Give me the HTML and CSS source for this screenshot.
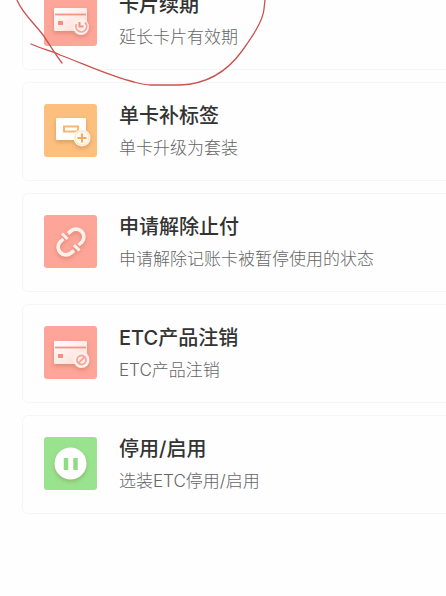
FILE: index.html
```html
<!DOCTYPE html>
<html lang="zh-CN">
<head>
    <meta charset="UTF-8">
    <meta name="viewport" content="width=device-width, initial-scale=1.0">
    <title>ETC服务</title>
    <link rel="stylesheet" href="styles.css">
</head>
<body>
    <main class="services">
        <a class="card" href="#renew">
            <svg class="icon icon-pink" viewBox="0 0 53 53" aria-hidden="true">
                <g class="shape">
                    <rect x="10" y="15" width="33" height="23" rx="1" fill="url(#fade)"/>
                    <path d="M11 21.5h31" stroke="#f59486" stroke-width="1.8"/>
                    <rect x="14" y="28" width="5" height="4" fill="#f28f80"/>
                    <circle cx="37" cy="34" r="8" fill="#fff0ec"/>
                </g>
                <path d="M32.5 31a5.4 5.4 0 1 0 8.500-1.5" fill="none" stroke="#f8a598" stroke-width="1.8"/>
                <path d="M35.500 29v4.500h4" fill="none" stroke="#f28f80" stroke-width="2"/>
            </svg>
            <div class="text">
                <h2>卡片续期</h2>
                <p>延长卡片有效期</p>
            </div>
        </a>

        <a class="card" href="#label">
            <svg class="icon icon-orange" viewBox="0 0 53 53" aria-hidden="true">
                <g class="shape">
                    <rect x="12" y="14" width="30" height="22" rx="1" fill="#fff"/>
                    <rect x="20" y="22.5" width="14" height="5" fill="none" stroke="#f5b671" stroke-width="2"/>
                    <circle cx="38" cy="34" r="8.500" fill="#fff8ee"/>
                </g>
                <circle cx="38" cy="34" r="7" fill="none" stroke="#fce3c4"/>
                <path d="M38 29.500v9M33.500 34h9" stroke="#f0ac60" stroke-width="2"/>
            </svg>
            <div class="text">
                <h2>单卡补标签</h2>
                <p>单卡升级为套装</p>
            </div>
        </a>

        <a class="card" href="#unblock">
            <svg class="icon icon-pink" viewBox="0 0 53 53" aria-hidden="true">
                <g class="shape" fill="none" stroke="#fff0e9" stroke-width="3.600">
                    <path d="M24 18.500l3-2.500a7.800 7.800 0 0 1 11 11l-3.500 3"/>
                    <path d="M30 35.500l-3 2.500a7.800 7.800 0 0 1-11-11l3.500-3"/>
                    <path d="M18 18.500l5.500 5.500M30 30l5.500 5.500" stroke-width="3"/>
                </g>
            </svg>
            <div class="text">
                <h2>申请解除止付</h2>
                <p>申请解除记账卡被暂停使用的状态</p>
            </div>
        </a>

        <a class="card" href="#cancel">
            <svg class="icon icon-pink" viewBox="0 0 53 53" aria-hidden="true">
                <g class="shape">
                    <rect x="10" y="15" width="33" height="23" rx="1" fill="url(#fade)"/>
                    <path d="M11 21.5h31" stroke="#f59486" stroke-width="1.8"/>
                    <rect x="14" y="28" width="5" height="4" fill="#f28f80"/>
                    <circle cx="37.500" cy="34" r="8" fill="#fff0ec"/>
                </g>
                <circle cx="37.500" cy="34" r="4.500" fill="none" stroke="#f8a598" stroke-width="1.800"/>
                <path d="M34.500 37l6-6" stroke="#f8a598" stroke-width="1.800"/>
            </svg>
            <div class="text">
                <h2>ETC产品注销</h2>
                <p>ETC产品注销</p>
            </div>
        </a>

        <a class="card" href="#switch">
            <svg class="icon icon-green" viewBox="0 0 53 53" aria-hidden="true">
                <circle class="shape" cx="26.500" cy="26.500" r="16" fill="#fff"/>
                <path d="M22 21v12M31.500 21v12" stroke="#8fdc85" stroke-width="4.500"/>
            </svg>
            <div class="text">
                <h2>停用/启用</h2>
                <p>选装ETC停用/启用</p>
            </div>
        </a>
    </main>

    <!-- Trazo rojo sobre la primera tarjeta -->
    <svg class="scribble" width="280" height="95" viewBox="0 0 280 95" aria-hidden="true">
        <defs>
            <linearGradient id="fade" x1="0" y1="0" x2="1" y2="1">
                <stop offset="0" stop-color="#fff"/>
                <stop offset="1" stop-color="#ffd9d1"/>
            </linearGradient>
        </defs>
        <path d="M17 0C22 13 35 24 43 35C50 45 55 54 62 63"/>
        <path d="M31 44C42 49 52 51 60 55C82 63 109 76 134 82C141 84 145 85 151 85H180C210 84 229 69 242 51C252 37 263 21 264 9L265 0"/>
    </svg>
</body>
</html>
```

FILE: styles.css
```css
* {
    box-sizing: border-box;
}

body {
    margin: 0;
    min-height: 100vh;
    background-color: #fefefe;
    font-family: Inter, "Noto Sans CJK SC", sans-serif;
    position: relative;
    overflow: hidden;
}

/* La lista empieza por encima del borde visible */
.services {
    display: flex;
    flex-direction: column;
    gap: 12px;
    margin: -29px -22px 0 22px;
}

.card {
    display: flex;
    align-items: flex-start;
    gap: 22px;
    padding: 21px 21px 20px;
    border: 1px solid #f5f5f5;
    border-radius: 6px;
    background: #fefefe;
    text-decoration: none;
}

.icon {
    width: 53px;
    height: 53px;
    border-radius: 3px;
    flex-shrink: 0;
}

.icon-pink {
    background-color: #fda598;
}

.icon-orange {
    background-color: #fcbf7e;
}

.icon-green {
    background-color: #99e38f;
}

.shape {
    filter: drop-shadow(0 2px 2px rgba(120, 50, 20, 0.25));
}

.text {
    display: flex;
    flex-direction: column;
    gap: 8px;
    white-space: nowrap;
}

h2 {
    margin: 0;
    color: #333;
    font-size: 20px;
    font-weight: 500;
    line-height: 24px;
}

p {
    margin: 0;
    color: #666;
    font-size: 17px;
    font-weight: 300;
    line-height: 24px;
}

.scribble {
    position: absolute;
    top: 0;
    left: 0;
    fill: none;
    stroke: #c9534b;
    stroke-width: 1.3px;
    stroke-linecap: round;
    pointer-events: none;
}
```
